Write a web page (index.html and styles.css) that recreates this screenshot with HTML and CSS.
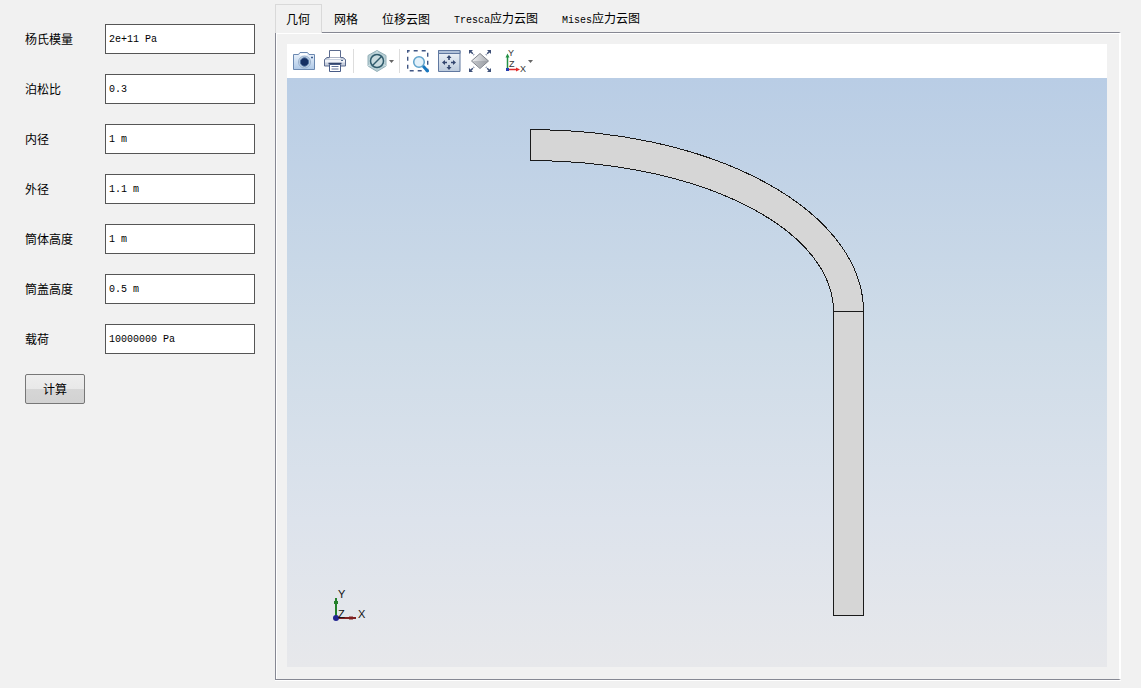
FILE: index.html
```html
<!DOCTYPE html>
<html lang="zh-CN">
<head>
<meta charset="utf-8">
<meta name="viewport" content="width=device-width, initial-scale=1">
<title>压力容器计算</title>
<link rel="stylesheet" href="styles.css">
</head>
<body>
<div class="app">
  <form class="params">
    <label class="params-label" for="young">杨氏模量</label>
    <input class="params-input" id="young" type="text" value="2e+11 Pa">
    <label class="params-label" for="poisson">泊松比</label>
    <input class="params-input" id="poisson" type="text" value="0.3">
    <label class="params-label" for="inner">内径</label>
    <input class="params-input" id="inner" type="text" value="1 m">
    <label class="params-label" for="outer">外径</label>
    <input class="params-input" id="outer" type="text" value="1.1 m">
    <label class="params-label" for="body-height">筒体高度</label>
    <input class="params-input" id="body-height" type="text" value="1 m">
    <label class="params-label" for="cap-height">筒盖高度</label>
    <input class="params-input" id="cap-height" type="text" value="0.5 m">
    <label class="params-label" for="load">载荷</label>
    <input class="params-input" id="load" type="text" value="10000000 Pa">
    <button class="calc" type="button">计算</button>
  </form>

  <main class="workspace">
    <div class="tabs" role="tablist">
      <button class="tab tab-active" type="button" role="tab" aria-selected="true">几何</button>
      <button class="tab" type="button" role="tab">网格</button>
      <button class="tab" type="button" role="tab">位移云图</button>
      <button class="tab" type="button" role="tab"><span class="latin">Tresca</span>应力云图</button>
      <button class="tab" type="button" role="tab"><span class="latin">Mises</span>应力云图</button>
    </div>

    <section class="panel" role="tabpanel">
      <div class="toolbar">
        <button class="tool" type="button" aria-label="截图">
          <svg width="24" height="24" viewBox="0 0 24 24">
            <defs><linearGradient id="cam" x2="0" y2="1"><stop offset="0" stop-color="#edf4fc"/><stop offset="1" stop-color="#aec8e6"/></linearGradient></defs>
            <path d="M1.500 5.500h5l1.500-2h7.500l1.500 2h5.500v15h-21z" fill="url(#cam)" stroke="#6b88b0"/>
            <path d="M8 4.500h7v2H8z" fill="#fff"/>
            <circle cx="12.500" cy="13" r="6" fill="#c7d8ea" stroke="#8ba3c0" stroke-width=".8"/>
            <circle cx="12.500" cy="13" r="4.200" fill="#162f62" stroke="#4d6f9d"/>
            <path d="M19 8.500h2" stroke="#3c5d8e" stroke-width="1.500"/>
          </svg>
        </button>
        <button class="tool tool-print" type="button" aria-label="打印">
          <svg width="24" height="24" viewBox="0 0 24 24">
            <path d="M6.500 1.500h11v8h-11z" fill="#fff" stroke="#5a6a8e"/>
            <path d="M4 8.500h16l2.500 2v6.500h-21v-6.500z" fill="#c8d0de" stroke="#5a6a8e"/>
            <path d="M6.500 8.500h11v1.500h-11z" fill="#fff"/>
            <path d="M2 11h20v2.500H2z" fill="#f1f3f8"/>
            <path d="M18 11.500h2" stroke="#536c91"/>
            <path d="M5.500 14.500h13" stroke="#32436a" stroke-width="1.500"/>
            <path d="M6.500 15.500h11v7h-11z" fill="#fff" stroke="#475b87"/>
            <path d="M8.500 17.500h7m-7 2.500h7" stroke="#62739a"/>
          </svg>
        </button>
        <span class="sep"></span>
        <button class="tool tool-menu tool-clip" type="button" aria-label="裁剪">
          <svg width="20" height="24" viewBox="0 0 20 24">
            <path d="M10 1.500l9 5v10.500l-9 5.500-9-5.500V6.500z" fill="#b7cfd5" stroke="#94b0b8"/>
            <path d="M10 2v5M1 17l5-3m13 3-5-3" stroke="#d5e5e9"/>
            <circle cx="10" cy="12" r="6.500" fill="#c9dbdf" stroke="#2f5b6c" stroke-width="1.500"/>
            <path d="M5.500 16.500l9-9" stroke="#2f5b6c" stroke-width="1.500"/>
          </svg>
          <svg class="caret" width="5" height="3" viewBox="0 0 5 3"><path d="M0 0h5L2.500 3z"/></svg>
        </button>
        <span class="sep sep-near"></span>
        <button class="tool tool-box" type="button" aria-label="框选缩放">
          <svg width="24" height="24" viewBox="0 0 24 24">
            <path d="M1.700 1.700h20v20h-20z" fill="none" stroke="#3f5583" stroke-width="1.400" stroke-dasharray="4 4" stroke-dashoffset="2"/>
            <path d="M9 9h12v12H9z" fill="#fff"/>
            <path d="M17.500 17.500l4 4.500" stroke="#1878c0" stroke-width="3" stroke-linecap="round"/>
            <circle cx="13" cy="13" r="5.300" fill="#e3f1fa" stroke="#5fa3cc" stroke-width="1.500"/>
          </svg>
        </button>
        <button class="tool tool-fit" type="button" aria-label="适合窗口">
          <svg width="24" height="24" viewBox="0 0 24 24">
            <defs><linearGradient id="fit" x2="0" y2="1"><stop offset="0" stop-color="#f1f5fa"/><stop offset="1" stop-color="#bccbdd"/></linearGradient></defs>
            <path d="M1.500 1.500h21.500v21H1.500z" fill="url(#fit)" stroke="#6078a0"/>
            <path d="M1.500 1.500h21.500v3H1.500z" fill="#b0c1d9" stroke="#6078a0"/>
            <path d="M12 11V8m0 8v3m-2-5.500H7m7 0h3" stroke="#33466f" stroke-width="1.600"/>
            <path d="M12 6l2.500 3h-5zm0 15 2.500-3h-5zM5 13.500l3-2.500v5zm14 0-3-2.500v5z" fill="#33466f"/>
          </svg>
        </button>
        <button class="tool tool-extent" type="button" aria-label="全部显示">
          <svg width="24" height="24" viewBox="0 0 24 24">
            <defs><linearGradient id="gem"><stop offset="0" stop-color="#f0f1f3"/><stop offset="1" stop-color="#a8abb1"/></linearGradient></defs>
            <path d="M12 4.500l8.500 7.500-8.500 7.500L3.500 12z" fill="url(#gem)" stroke="#7e828a"/>
            <path d="M4.500 12h15L12 19z" fill="#82868f" fill-opacity=".4"/>
            <path d="M2 2l4 4m16-4-4 4M2 22l4-4m16 4-4-4" stroke="#3e5078" stroke-width="1.500" stroke-dasharray="4 1"/>
            <path d="M1 1h4L1 5zm22 0v4l-4-4zM1 23v-4l4 4zm22 0h-4l4-4z" fill="#3e5078"/>
          </svg>
        </button>
        <button class="tool tool-menu tool-axes" type="button" aria-label="视图方向">
          <svg width="22" height="26" viewBox="0 0 22 26">
            <path d="M3.500 21V9" stroke="#239044" stroke-width="1.500"/><path d="M3.500 5.500l2 4h-4z" fill="#239044"/>
            <path d="M3 21.500h10" stroke="#e12b2b" stroke-width="1.500"/><path d="M16 21.500l-4-2v4z" fill="#e12b2b"/>
            <path d="M2 20h3v3H2z" fill="#243fb0"/>
            <text class="icon-text" x="4" y="8">Y</text><text class="icon-text" x="5" y="19">Z</text><text class="icon-text" x="16" y="24">X</text>
          </svg>
          <svg class="caret" width="5" height="3" viewBox="0 0 5 3"><path d="M0 0h5L2.500 3z"/></svg>
        </button>
      </div>

      <div class="scene">
        <svg class="drawing" viewBox="0 0 820 589" role="img" aria-label="几何模型">
          <g fill="#d6d6d6" stroke="#1a1a1a" shape-rendering="crispEdges">
            <path d="M243.500 51.500A333 182 0 0 1 576.500 233.500H546.500A303 151 0 0 0 243.500 82.500Z"/>
            <path d="M546.500 233.500h30v304h-30z"/>
          </g>
          <path d="M49 540v-20" stroke="#23802b" stroke-width="2"/><path d="M47 523h4v3h-4z" fill="#23802b"/>
          <path d="M49 540h20" stroke="#7e2020" stroke-width="2"/><path d="M62 538.500h4v3h-4z" fill="#7e2020"/>
          <circle cx="49" cy="540" r="3" fill="#222590"/>
          <text class="axis-text" x="51" y="520">Y</text><text class="axis-text" x="51" y="540">Z</text><text class="axis-text" x="71" y="540">X</text>
        </svg>
      </div>
    </section>
  </main>
</div>
</body>
</html>
```
FILE: styles.css
```css
* {
  box-sizing: border-box;
}

body {
  margin: 0;
  background: #f1f1f1;
  color: #000;
  font: 12px/16px "Noto Sans CJK SC", sans-serif;
}

button,
input {
  margin: 0;
  color: inherit;
  font: inherit;
}

.app {
  display: flex;
  gap: 20px;
  min-height: 100vh;
  padding: 4px 20px 8px 25px;
}

.params {
  display: grid;
  flex: none;
  grid-template-columns: 80px 150px;
  grid-auto-rows: 30px;
  row-gap: 20px;
  align-items: center;
  align-content: start;
  padding-top: 20px;
}

.params-input {
  width: 100%;
  height: 30px;
  padding: 0 3px;
  border: 1px solid #555;
  border-radius: 0;
  background: #fff;
  font: 10px/16px "Liberation Mono", monospace;
}

.calc {
  width: 60px;
  height: 30px;
  padding: 0;
  border: 1px solid #777;
  border-radius: 2px;
  background: linear-gradient(#eee, #e8e8e8 50%, #d6d6d6 50%, #d2d2d2);
}

.workspace {
  display: flex;
  flex: 1;
  flex-direction: column;
  min-width: 0;
}

.tabs {
  display: flex;
}

.tab {
  height: 28px;
  padding: 2px 12px 0;
  border: 0;
  background: none;
  white-space: nowrap;
}

.tab-active {
  position: relative;
  height: 29px;
  margin-bottom: -1px;
  padding: 0 11px 0 10px;
  border: 1px solid #d9d9d9;
  border-bottom: 0;
  background: #f1f1f1;
}

.latin {
  font: 10px/16px "Liberation Mono", monospace;
}

.panel {
  display: flex;
  flex: 1;
  flex-direction: column;
  padding: 11px 12px 12px 11px;
  border: 1px solid #868893;
  border-right: 2px solid #fff;
  box-shadow: inset 1px 1px #fff, 0 1px #fff;
}

.toolbar {
  display: flex;
  align-items: center;
  height: 34px;
  padding-left: 5px;
  background: #fff;
}

.tool {
  display: flex;
  align-items: center;
  padding: 0;
  border: 0;
  background: none;
}

.tool-print,
.tool-fit,
.tool-extent {
  margin-left: 7px;
}

.tool-box {
  margin-left: 6px;
}

.tool-clip {
  margin-left: 13px;
}

.tool-axes {
  margin-left: 12px;
}

.tool-menu {
  gap: 2px;
}

.caret {
  fill: #666;
}

.sep {
  width: 1px;
  height: 24px;
  margin-left: 6px;
  background: #ddd;
}

.sep-near {
  margin-left: 5px;
}

.icon-text {
  fill: #333;
  font: 9px "Liberation Sans", sans-serif;
}

.scene {
  display: grid;
  flex: 1;
  min-height: 0;
  background: linear-gradient(#b9cde5, #cfdce8 45%, #dde3ec 75%, #e7e8eb);
}

.drawing {
  width: 100%;
  height: 100%;
}

.axis-text {
  fill: #111;
  font: 11px "Liberation Sans", sans-serif;
}
```
